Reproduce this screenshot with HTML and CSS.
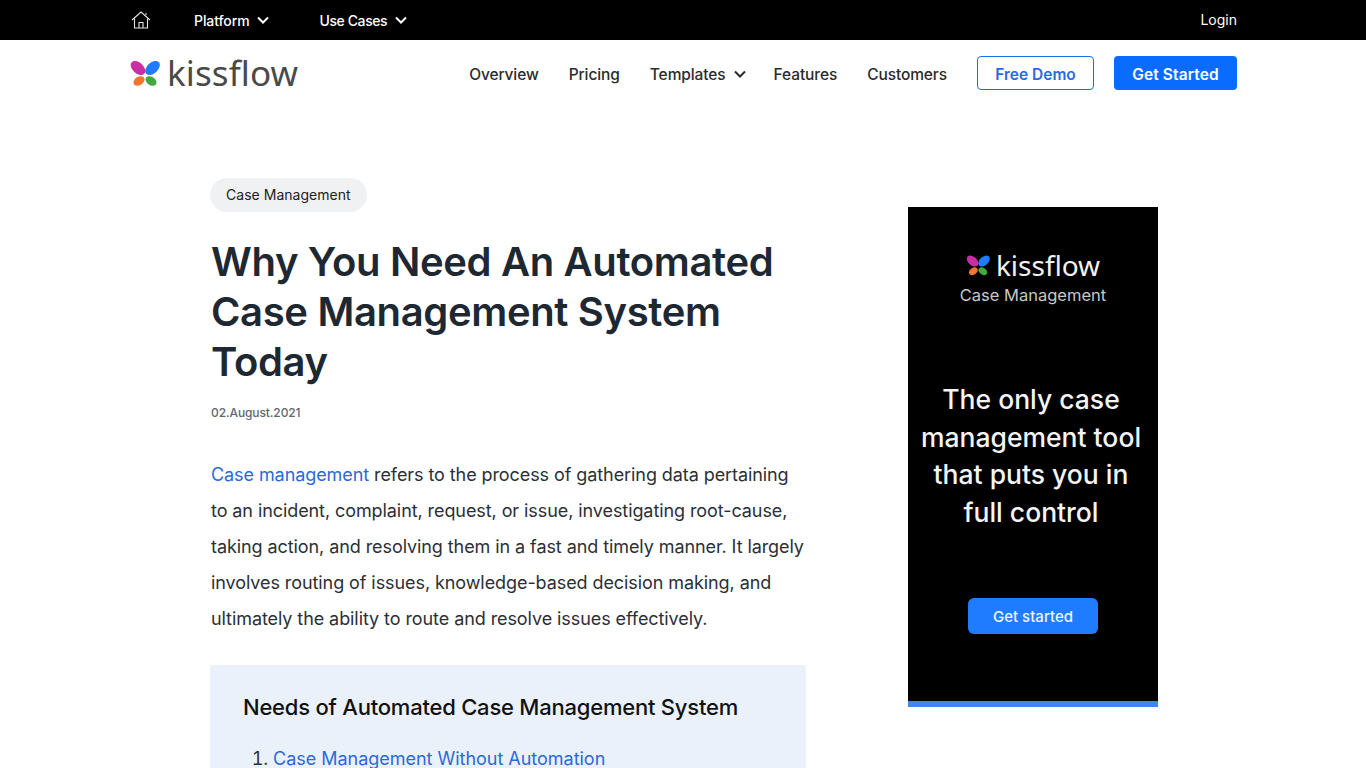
FILE: index.html
```html
<!DOCTYPE html>
<html lang="en">
<head>
    <meta charset="UTF-8">
    <meta name="viewport" content="width=device-width, initial-scale=1.0">
    <title>Why You Need An Automated Case Management System Today</title>
    <link rel="stylesheet" href="styles.css">
</head>
<body>
    <div class="topbar">
        <div class="topbar-inner">
            <a class="home-link" href="#" aria-label="Home">
                <svg width="20" height="18" viewBox="0 0 20 18" fill="none" stroke="#e4e4e4" stroke-width="1.1">
                    <path d="M1 9 10 1l9 8"/>
                    <path d="M3.5 7.5V17h13V7.5"/>
                    <path d="M8 17v-5.500h4V17"/>
                    <path d="M15 4V2"/>
                </svg>
            </a>
            <a class="top-link platform" href="#">Platform
                <svg class="chevron" width="12" height="8" viewBox="0 0 12 8" fill="none" stroke="#fff" stroke-width="2"><path d="M1 1.500 6 6.500l5-5"/></svg>
            </a>
            <a class="top-link use-cases" href="#">Use Cases
                <svg class="chevron" width="12" height="8" viewBox="0 0 12 8" fill="none" stroke="#fff" stroke-width="2"><path d="M1 1.500 6 6.500l5-5"/></svg>
            </a>
            <a class="login" href="#">Login</a>
        </div>
    </div>

    <header class="mainnav">
        <a class="logo" href="#">
            <svg class="butterfly" width="31" height="28" viewBox="0 0 31 28">
                <ellipse cx="8" cy="9" rx="8.500" ry="5.500" fill="#c92fa3" transform="rotate(42 8 9)"/>
                <ellipse cx="22.500" cy="9" rx="8.500" ry="5.500" fill="#1f7cff" transform="rotate(-42 22.500 9)"/>
                <ellipse cx="9" cy="22" rx="6" ry="4.200" fill="#f5732a" transform="rotate(-35 9 22)"/>
                <ellipse cx="21" cy="22" rx="6" ry="4.200" fill="#43a83f" transform="rotate(35 21 22)"/>
            </svg>
            <span class="logo-text">kissflow</span>
        </a>
        <nav class="nav-links">
            <a href="#">Overview</a>
            <a href="#">Pricing</a>
            <a href="#" class="has-menu">Templates
                <svg class="chevron" width="12" height="8" viewBox="0 0 12 8" fill="none" stroke="#2b2b2b" stroke-width="2"><path d="M1 1.500 6 6.500l5-5"/></svg>
            </a>
            <a href="#">Features</a>
            <a href="#">Customers</a>
        </nav>
        <a class="btn btn-outline" href="#">Free Demo</a>
        <a class="btn btn-solid" href="#">Get Started</a>
    </header>

    <div class="page">
        <main class="article">
            <span class="tag">Case Management</span>
            <h1>Why You Need An Automated Case Management System Today</h1>
            <p class="date">02.August.2021</p>
            <p class="intro"><a href="#">Case management</a> refers to the process of gathering data pertaining to an incident, complaint, request, or issue, investigating root-cause, taking action, and resolving them in a fast and timely manner. It largely involves routing of issues, knowledge-based decision making, and ultimately the ability to route and resolve issues effectively.</p>
            <div class="toc">
                <h2>Needs of Automated Case Management System</h2>
                <ol>
                    <li><a href="#">Case Management Without Automation</a></li>
                </ol>
            </div>
        </main>

        <aside class="ad">
            <div class="ad-logo">
                <svg width="25" height="22" viewBox="0 0 31 28">
                    <ellipse cx="8" cy="9" rx="8.500" ry="5.500" fill="#c92fa3" transform="rotate(42 8 9)"/>
                    <ellipse cx="22.500" cy="9" rx="8.500" ry="5.500" fill="#1f7cff" transform="rotate(-42 22.500 9)"/>
                    <ellipse cx="9" cy="22" rx="6" ry="4.200" fill="#f5732a" transform="rotate(-35 9 22)"/>
                    <ellipse cx="21" cy="22" rx="6" ry="4.200" fill="#43a83f" transform="rotate(35 21 22)"/>
                </svg>
                <span>kissflow</span>
            </div>
            <div class="ad-product">Case Management</div>
            <p class="ad-title">The only case management tool that puts you in full control</p>
            <a class="ad-btn" href="#">Get started</a>
        </aside>
    </div>
</body>
</html>
```

FILE: styles.css
```css
html, body {
    height: 768px;
    overflow: hidden;
}

body {
    font-family: Inter, "Liberation Sans", sans-serif;
    margin: 0;
    padding: 0;
    background-color: #fff;
    color: #1e2833;
}

a {
    text-decoration: none;
}

.topbar {
    background-color: #000;
    height: 40px;
}

.topbar-inner {
    width: 1106px;
    margin-left: 131px;
    height: 40px;
    display: flex;
    align-items: center;
}

.home-link {
    display: flex;
    width: 63px;
}

.top-link {
    color: #fff;
    font-size: 14px;
    font-weight: 500;
    display: flex;
    align-items: center;
    gap: 8px;
    letter-spacing: -0.1px;
}

.platform {
    margin-right: 50px;
}

.use-cases {
    letter-spacing: -0.4px;
}

.login {
    margin-left: auto;
    color: #fff;
    font-size: 14px;
    padding-bottom: 1px;
}

.mainnav {
    width: 1107px;
    margin-left: 130px;
    height: 66px;
    display: flex;
    align-items: center;
}

.logo {
    display: flex;
    align-items: center;
    gap: 6px;
}

.logo-text {
    font-family: "Noto Sans", sans-serif;
    font-size: 35px;
    color: #4a4a4a;
    line-height: 40px;
    letter-spacing: 0.1px;
}

.nav-links {
    display: flex;
    align-items: center;
    gap: 30px;
    margin-left: auto;
    margin-right: 30px;
    padding-top: 2px;
}

.nav-links a {
    color: #2b2b2b;
    font-size: 15.500px;
    font-weight: 500;
    letter-spacing: -0.1px;
}

.nav-links .has-menu {
    display: flex;
    align-items: center;
    gap: 8px;
    margin-right: -2px;
}

.btn {
    box-sizing: border-box;
    height: 34px;
    padding-top: 2px;
    border-radius: 4px;
    display: flex;
    align-items: center;
    justify-content: center;
    font-size: 15.500px;
    font-weight: 600;
}

.btn-outline {
    width: 117px;
    border: 1px solid #1a6ee6;
    color: #2a69e0;
    margin-right: 20px;
}

.btn-solid {
    width: 123px;
    background-color: #0a6cff;
    color: #fff;
    letter-spacing: 0.1px;
}

.page {
    display: flex;
    align-items: flex-start;
    margin-left: 210px;
    padding-top: 72px;
}

.article {
    width: 596px;
    margin-right: 102px;
}

.tag {
    display: inline-block;
    background-color: #f0f1f3;
    border-radius: 17px;
    padding: 0 16px;
    height: 34px;
    line-height: 34px;
    font-size: 14px;
    color: #222;
    letter-spacing: 0.03px;
}

h1 {
    font-size: 40px;
    line-height: 50px;
    font-weight: 600;
    margin: 25px 0 0 1px;
    color: #1e2833;
    letter-spacing: -0.35px;
}

.date {
    font-size: 12px;
    font-weight: 500;
    color: #5f6670;
    margin: 18px 0 0 1px;
    line-height: 16px;
    letter-spacing: -0.1px;
}

.intro {
    font-size: 18px;
    line-height: 36px;
    color: #2c2f36;
    margin: 36px 0 0 1px;
    letter-spacing: -0.08px;
}

.intro a,
.toc a {
    color: #2b6ad6;
}

.toc {
    background-color: #ebf1fb;
    margin-top: 28px;
    padding: 24px 33px;
    height: 200px;
}

.toc h2 {
    font-size: 22px;
    font-weight: 500;
    line-height: 36px;
    margin: 0;
    color: #111;
    letter-spacing: -0.22px;
}

.toc ol {
    margin: 19px 0 0;
    padding-left: 30px;
    font-size: 18px;
    line-height: 30px;
    color: #2c2f36;
    letter-spacing: -0.02px;
}

.ad {
    box-sizing: border-box;
    width: 250px;
    height: 500px;
    margin-top: 29px;
    background-color: #000;
    border-bottom: 6px solid #3f86ee;
    display: flex;
    flex-direction: column;
    align-items: center;
    color: #fff;
}

.ad-logo {
    display: flex;
    align-items: center;
    gap: 5px;
    margin-top: 41px;
    font-family: "Noto Sans", sans-serif;
    font-size: 28px;
    line-height: 34px;
    color: #f2f2f2;
}

.ad-product {
    font-size: 16.500px;
    color: #c8c8c8;
    margin-top: 3px;
    line-height: 20px;
}

.ad-title {
    font-size: 26.500px;
    font-weight: 500;
    line-height: 37.500px;
    text-align: center;
    margin: 76px 4px 0 0;
    width: 230px;
    color: #f4f4f4;
}

.ad-btn {
    margin-top: 67px;
    width: 130px;
    height: 36px;
    border-radius: 6px;
    background-color: #1f7cff;
    color: #eef4ff;
    font-size: 15px;
    font-weight: 500;
    display: flex;
    align-items: center;
    justify-content: center;
}

.chevron {
    display: block;
}
```
